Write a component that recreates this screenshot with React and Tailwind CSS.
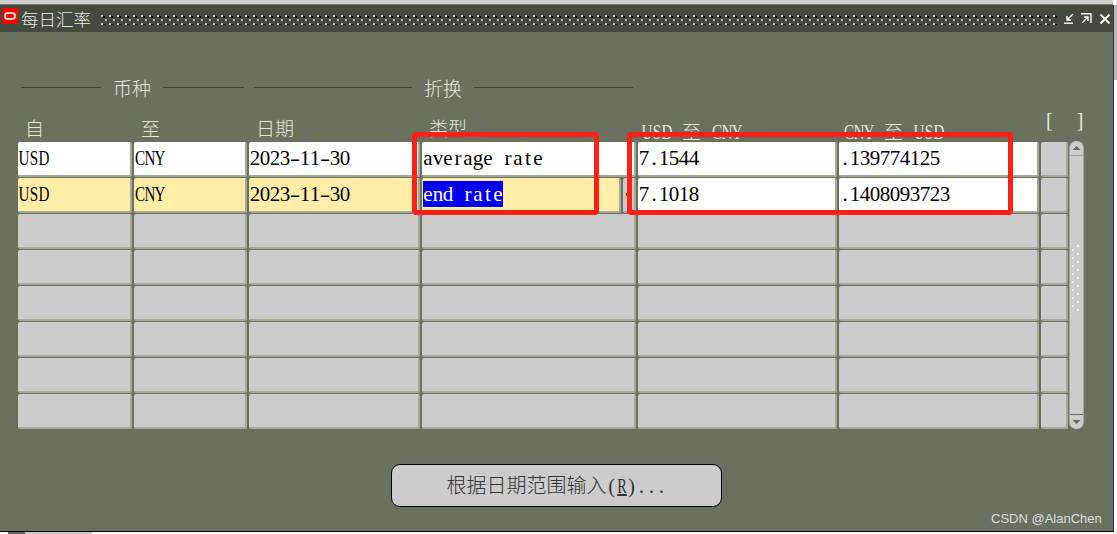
import React from 'react';

// SimSun style half-width text: every latin char sits in a 10px cell
const Half = ({ text, className = '' }) => (
  <>
    {[...text].map((c, i) => {
      let cls = '';
      if (/[A-Z]/.test(c)) cls = 'scale-x-[.72]';
      if (c === '-') cls = 'scale-x-150';
      return (
        <span key={i} className={`inline-flex justify-center w-[10px] whitespace-pre ${cls} ${className}`}>{c}</span>
      );
    })}
  </>
);

const serif = 'font-["Liberation_Serif","Noto_Sans_CJK_SC",serif]';

const rows = [
  { bg: 'bg-white', cells: ['USD', 'CNY', '2023-11-30', 'average rate', '7.1544', '.139774125'] },
  { bg: 'bg-[#ffeda8]', cells: ['USD', 'CNY', '2023-11-30', 'end rate', '7.1018', '.1408093723'], current: true },
  { cells: [] },
  { cells: [] },
  { cells: [] },
  { cells: [] },
  { cells: [] },
  { cells: [] },
];

const Cell = ({ className = '', children }) => (
  <div className={`h-[35px] rounded-[2px] border-r-2 border-b-2 border-[#a6a998] pl-px pt-[2px] text-[21px] leading-[28px] text-black whitespace-nowrap overflow-hidden ${serif} ${className}`}>
    {children}
  </div>
);

const Row = ({ row }) => {
  const bg = row.bg || 'bg-[#cccccc]';
  const c = row.cells;
  const num = c.length ? 'bg-white' : bg;
  return (
    <>
      <Cell className={bg}>{c[0] && <Half text={c[0]} />}</Cell>
      <Cell className={bg}>{c[1] && <Half text={c[1]} />}</Cell>
      <Cell className={bg}>{c[2] && <Half text={c[2]} />}</Cell>
      {row.current ? (
        <div className="flex gap-[2px]">
          <Cell className={`${bg} flex-1`}>
            <span className="bg-[#0000ee] text-white inline-block h-[26px] leading-[26px] mt-px"><Half text={c[3]} /></span>
          </Cell>
          <Cell className="bg-[#cccccc] w-[13px] font-bold">·</Cell>
        </div>
      ) : (
        <Cell className={`${bg} pl-[2px]`}>{c[3] && <Half text={c[3]} />}</Cell>
      )}
      <Cell className={num}>{c[4] && <Half text={c[4]} />}</Cell>
      <Cell className={num}>{c[5] && <Half text={c[5]} />}</Cell>
      <Cell className="bg-[#cccccc]" />
    </>
  );
};

const Heading = ({ children, className, lineClass }) => (
  <div className={`flex items-center ${className}`}>
    <div className={`h-px bg-[#41463a] ${lineClass}`} />
    <span className="text-[19px] font-light text-[#e4e6dc] mx-[12px] leading-none">{children}</span>
    <div className="h-px flex-1 bg-[#41463a]" />
  </div>
);

const Scrollbar = () => (
  <div className="w-[15px] h-[288px] ml-px -mt-px bg-[#cccccc] rounded-t-[7px] rounded-b-[7px] border-x border-[#a6a998] flex flex-col items-center">
    <svg width="13" height="15" viewBox="0 0 13 15" className="shrink-0">
      <path d="M2.5 9 L6.5 5 L10.5 9 Z" fill="#5f6553" />
      <path d="M0 14.5 H13" stroke="#a6a998" />
    </svg>
    <div className="flex-1 w-full flex items-center justify-center pb-[14px]">
      <svg width="10" height="66" viewBox="0 0 10 66">
        <defs>
          <pattern id="grip" width="10" height="8" patternUnits="userSpaceOnUse">
            <rect x="0" y="4" width="2" height="2" fill="#f4f4f4" />
            <rect x="5" y="0" width="2" height="2" fill="#f4f4f4" />
          </pattern>
        </defs>
        <rect width="10" height="66" fill="url(#grip)" />
      </svg>
    </div>
    <svg width="13" height="15" viewBox="0 0 13 15" className="shrink-0">
      <path d="M0 0.5 H13" stroke="#6b715f" />
      <path d="M2.5 6 L10.5 6 L6.5 10 Z" fill="#5f6553" />
    </svg>
  </div>
);

export default function App() {
  return (
    <div className="w-[1117px] h-[534px] overflow-hidden bg-white flex flex-col font-['Noto_Sans_CJK_SC',sans-serif] relative">
      <div className="h-[5px] bg-[#d0d0d0] border-b border-[#777777] shrink-0 mr-[4px]" />
      <div className="flex flex-1 min-h-0">
        <div className="flex-1 flex flex-col border-r border-[#333333] border-b border-b-black bg-[#6b715f]">
          {/* title bar */}
          <div className="h-[27px] bg-[#454a3e] flex items-center shrink-0">
            <div className="w-[16px] h-[16px] ml-[2px] mb-[6px] bg-[#ff0000] flex items-center justify-center shrink-0">
              <div className="w-[12px] h-[8px] rounded-[4px] border-2 border-[#ffd0d0]" />
            </div>
            <span className="text-[17.5px] font-light leading-none text-[#e4e8e4] ml-[3px] shrink-0">每日汇率</span>
            <svg className="ml-[9px] shrink-0" width="957" height="12" viewBox="0 0 957 12">
              <defs>
                <pattern id="dots" width="8" height="8" patternUnits="userSpaceOnUse">
                  <rect x="1" y="2" width="2" height="2" fill="#c4c4ba" />
                  <rect x="3" y="3" width="2" height="2" fill="#0c0c0c" />
                  <rect x="5" y="6" width="2" height="2" fill="#c4c4ba" />
                  <rect x="7" y="7" width="1" height="1" fill="#0c0c0c" />
                </pattern>
              </defs>
              <rect width="957" height="12" fill="url(#dots)" />
            </svg>
            <div className="flex items-center gap-[7px] ml-[7px]">
              <svg width="10" height="11" viewBox="0 0 10 11" fill="none" stroke="#ffffff" strokeWidth="1.4">
                <path d="M0 10.2 H9" />
                <path d="M9 1 L3.5 6.5 M3 3 V7 H7" />
              </svg>
              <svg width="11" height="11" viewBox="0 0 11 11" fill="none" stroke="#ffffff" strokeWidth="1.4">
                <path d="M0 .8 H10 V10" />
                <path d="M1 10 L6.5 4.5 M3 4 H7 V8" />
              </svg>
              <svg width="12" height="12" viewBox="0 0 12 12" fill="none" stroke="#ffffff" strokeWidth="1.8">
                <path d="M1.5 1.5 L10.5 10.5 M10.5 1.5 L1.5 10.5" />
              </svg>
            </div>
          </div>

          {/* headings */}
          <div className="flex gap-[10px] pl-[21px] mt-[45px] h-[20px] items-center shrink-0">
            <Heading className="w-[223px]" lineClass="w-[80px]">币种</Heading>
            <Heading className="w-[379px]" lineClass="w-[158px]">折换</Heading>
          </div>

          {/* labels */}
          <div className="h-[31px] mt-[14px] relative shrink-0">
            <div className="grid grid-cols-[116px_115px_173px_216px_201px_202px_auto] pl-[18px] text-[19px] font-light text-[#e4e6dc] leading-[26px] pt-[4px]">
              <span className="pl-[7px]">自</span>
              <span className="pl-[7px]">至</span>
              <span className="pl-[7px]">日期</span>
              <span className="pl-[7px]">类型</span>
              <span className={`pl-[4px] text-[21px] mt-[3px] whitespace-nowrap ${serif}`}>
                <Half text="USD " /><span className="inline-block w-[20px] text-[19px] font-['Noto_Sans_CJK_SC',sans-serif]">至</span><Half text=" CNY" />
              </span>
              <span className={`pl-[5px] text-[21px] mt-[3px] whitespace-nowrap ${serif}`}>
                <Half text="CNY " /><span className="inline-block w-[20px] text-[19px] font-['Noto_Sans_CJK_SC',sans-serif]">至</span><Half text=" USD" />
              </span>
              <span className={`pl-[5px] flex gap-[24px] -translate-y-[8px] text-[20px] ${serif}`}><span>[</span><span>]</span></span>
            </div>
          </div>

          {/* table */}
          <div className="flex pl-[18px] shrink-0">
            <div className="grid grid-cols-[114px_113px_171px_214px_199px_200px_27px] auto-rows-[35px] gap-x-[2px] gap-y-[1px]">
              {rows.map((row, i) => <Row key={i} row={row} />)}
            </div>
            <Scrollbar />
          </div>

          {/* button */}
          <div className="pl-[391px] mt-[35px]">
            <button className="w-[331px] h-[43px] rounded-[9px] border border-black bg-[#cccccc] text-[20px] font-light leading-none text-[#333333]">
              根据日期范围输入<span className={serif}><Half text="(" /><Half text="R" className="underline" /><Half text=")..." /></span>
            </button>
          </div>
        </div>
        <div className="w-[3px] flex flex-col shrink-0">
          <div className="h-[75px] bg-[#b9b9b9]" />
          <div className="flex-1 bg-white" />
        </div>
      </div>
      <div className="h-[2px] shrink-0 flex pl-[8px]">
        <div className="w-[17px] bg-[#666666]" />
        <div className="w-[67px] bg-[#c8c8c8]" />
      </div>

      {/* red annotations */}
      <div className="absolute left-[412px] top-[132px] w-[187px] h-[83px] border-[5px] border-[#ff2015] rounded-[4px]" />
      <div className="absolute left-[627px] top-[132px] w-[386px] h-[83px] border-[5px] border-[#ff2015] rounded-[4px]" />
      <span className="absolute left-[991px] top-[511px] text-[13px] leading-[16px] text-[#dcdcdc] font-['Liberation_Sans',sans-serif]">CSDN @AlanChen</span>
    </div>
  );
}
